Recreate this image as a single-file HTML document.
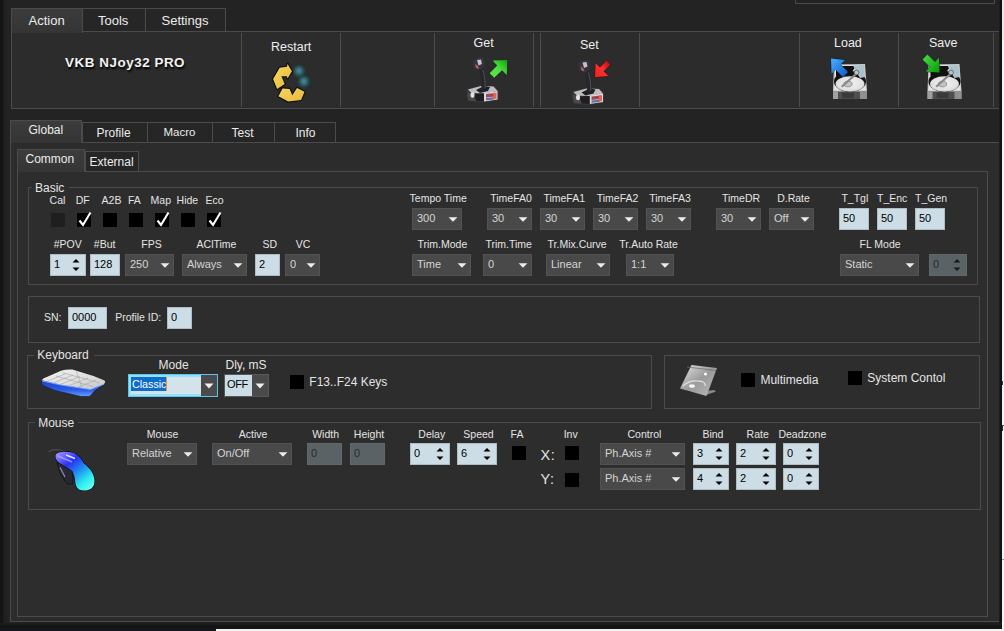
<!DOCTYPE html>
<html><head><meta charset="utf-8"><style>
html,body{margin:0;padding:0;}
body{width:1004px;height:631px;overflow:hidden;background:#232323;position:relative;font-family:"Liberation Sans",sans-serif;}
.t{position:absolute;white-space:nowrap;line-height:normal;}
svg{display:block;}
</style></head><body>
<div style="position:absolute;left:0px;top:0px;width:3px;height:631px;background:#151515;"></div>
<div style="position:absolute;left:3px;top:0px;width:1px;height:631px;background:#1b1b1b;"></div>
<div style="position:absolute;left:4px;top:0px;width:3px;height:631px;background:#202020;"></div>
<div style="position:absolute;left:795px;top:-5px;width:200px;height:9px;border:1px solid #4a4a4a;box-sizing:border-box;"></div>
<div style="position:absolute;left:11px;top:31px;width:995px;height:78px;border:1px solid #4b4b4b;box-sizing:border-box;background:#2c2c2c;"></div>
<div style="position:absolute;left:11px;top:8px;width:72px;height:25px;border:1px solid #4b4b4b;border-bottom:none;box-sizing:border-box;background:linear-gradient(#3b3b3b,#353535);"></div>
<div style="position:absolute;left:82px;top:8px;width:64px;height:24px;border:1px solid #4b4b4b;box-sizing:border-box;background:#262626;"></div>
<div style="position:absolute;left:145px;top:8px;width:81px;height:24px;border:1px solid #4b4b4b;box-sizing:border-box;background:#262626;"></div>
<div class="t" style="left:28.5px;top:13.13px;font-size:13px;color:#ececec;">Action</div>
<div class="t" style="left:98.0px;top:13.13px;font-size:13px;color:#ececec;">Tools</div>
<div class="t" style="left:161.5px;top:13.13px;font-size:13px;color:#ececec;">Settings</div>
<div style="position:absolute;left:241px;top:33px;width:1px;height:74px;background:#4c4c4c;"></div>
<div style="position:absolute;left:340px;top:33px;width:1px;height:74px;background:#4c4c4c;"></div>
<div style="position:absolute;left:434px;top:33px;width:1px;height:74px;background:#4c4c4c;"></div>
<div style="position:absolute;left:533px;top:33px;width:1px;height:74px;background:#4c4c4c;"></div>
<div style="position:absolute;left:540px;top:33px;width:1px;height:74px;background:#4c4c4c;"></div>
<div style="position:absolute;left:639px;top:33px;width:1px;height:74px;background:#4c4c4c;"></div>
<div style="position:absolute;left:799px;top:33px;width:1px;height:74px;background:#4c4c4c;"></div>
<div style="position:absolute;left:898px;top:33px;width:1px;height:74px;background:#4c4c4c;"></div>
<div style="position:absolute;left:993px;top:33px;width:1px;height:74px;background:#4c4c4c;"></div>
<div class="t" style="left:65.0px;top:54.87px;font-size:13.4px;color:#f2f2f2;font-weight:bold;letter-spacing:0.55px;text-shadow:1px 2px 2px #000;">VKB NJoy32 PRO</div>
<div class="t" style="left:271.0px;top:39.69px;font-size:12.5px;color:#eeeeee;">Restart</div>
<div class="t" style="left:473.6px;top:35.69px;font-size:12.5px;color:#eeeeee;">Get</div>
<div class="t" style="left:580.0px;top:37.69px;font-size:12.5px;color:#eeeeee;">Set</div>
<div class="t" style="left:834.0px;top:35.69px;font-size:12.5px;color:#eeeeee;">Load</div>
<div class="t" style="left:929.0px;top:35.69px;font-size:12.5px;color:#eeeeee;">Save</div>
<div style="position:absolute;left:10px;top:142px;width:996px;height:480px;border:1px solid #4b4b4b;box-sizing:border-box;background:#2c2c2c;"></div>
<div style="position:absolute;left:10px;top:120px;width:72px;height:23px;border:1px solid #4b4b4b;border-bottom:none;box-sizing:border-box;background:linear-gradient(#3c3c3c,#343434);"></div>
<div style="position:absolute;left:82px;top:122px;width:66px;height:21px;border:1px solid #4b4b4b;box-sizing:border-box;background:#262626;"></div>
<div style="position:absolute;left:147px;top:122px;width:66px;height:21px;border:1px solid #4b4b4b;box-sizing:border-box;background:#262626;"></div>
<div style="position:absolute;left:212px;top:122px;width:63px;height:21px;border:1px solid #4b4b4b;box-sizing:border-box;background:#262626;"></div>
<div style="position:absolute;left:274px;top:122px;width:62px;height:21px;border:1px solid #4b4b4b;box-sizing:border-box;background:#262626;"></div>
<div class="t" style="left:28.5px;top:123.04px;font-size:12px;color:#ececec;">Global</div>
<div class="t" style="left:96.6px;top:126.04px;font-size:12px;color:#ececec;">Profile</div>
<div class="t" style="left:163.5px;top:126.49px;font-size:11.5px;color:#ececec;">Macro</div>
<div class="t" style="left:231.6px;top:126.04px;font-size:12px;color:#ececec;">Test</div>
<div class="t" style="left:295.4px;top:126.04px;font-size:12px;color:#ececec;">Info</div>
<div style="position:absolute;left:17px;top:171px;width:971px;height:446px;border:1px solid #4b4b4b;box-sizing:border-box;background:#2d2d2d;"></div>
<div style="position:absolute;left:17px;top:149px;width:68px;height:23px;border:1px solid #4b4b4b;border-bottom:none;box-sizing:border-box;background:linear-gradient(#3c3c3c,#353535);"></div>
<div style="position:absolute;left:85px;top:151px;width:54px;height:21px;border:1px solid #4b4b4b;box-sizing:border-box;background:#262626;"></div>
<div class="t" style="left:25.5px;top:151.94px;font-size:12px;color:#ececec;">Common</div>
<div class="t" style="left:89.6px;top:154.94px;font-size:12px;color:#ececec;">External</div>
<div style="position:absolute;left:28px;top:187px;width:950px;height:98px;border:1px solid #4b4b4b;box-sizing:border-box;"></div>
<div style="position:absolute;left:32px;top:185px;width:37px;height:4px;background:#2d2d2d;"></div>
<div class="t" style="left:35.0px;top:181.04px;font-size:12px;color:#e4e4e4;">Basic</div>
<div class="t" style="left:49.6px;top:194.10px;font-size:10.5px;color:#e4e4e4;">Cal</div>
<div class="t" style="left:75.7px;top:194.10px;font-size:10.5px;color:#e4e4e4;">DF</div>
<div class="t" style="left:101.6px;top:194.10px;font-size:10.5px;color:#e4e4e4;">A2B</div>
<div class="t" style="left:127.9px;top:194.10px;font-size:10.5px;color:#e4e4e4;">FA</div>
<div class="t" style="left:150.6px;top:194.10px;font-size:10.5px;color:#e4e4e4;">Map</div>
<div class="t" style="left:176.6px;top:194.10px;font-size:10.5px;color:#e4e4e4;">Hide</div>
<div class="t" style="left:205.5px;top:194.10px;font-size:10.5px;color:#e4e4e4;">Eco</div>
<div style="position:absolute;left:51px;top:213px;width:14px;height:14px;background:#1f1f1f;"></div>
<div style="position:absolute;left:77px;top:213px;width:14px;height:14px;background:#000;"></div>
<svg style="position:absolute;left:77px;top:211px" width="16" height="17"><path d="M2.5 9.5 L6 14 L13.5 1.5" stroke="#fff" stroke-width="2.1" fill="none" stroke-linejoin="miter"/></svg>
<div style="position:absolute;left:103px;top:213px;width:14px;height:14px;background:#000;"></div>
<div style="position:absolute;left:129px;top:213px;width:14px;height:14px;background:#000;"></div>
<div style="position:absolute;left:155px;top:213px;width:14px;height:14px;background:#000;"></div>
<svg style="position:absolute;left:155px;top:211px" width="16" height="17"><path d="M2.5 9.5 L6 14 L13.5 1.5" stroke="#fff" stroke-width="2.1" fill="none" stroke-linejoin="miter"/></svg>
<div style="position:absolute;left:181px;top:213px;width:14px;height:14px;background:#000;"></div>
<div style="position:absolute;left:207px;top:213px;width:14px;height:14px;background:#000;"></div>
<svg style="position:absolute;left:207px;top:211px" width="16" height="17"><path d="M2.5 9.5 L6 14 L13.5 1.5" stroke="#fff" stroke-width="2.1" fill="none" stroke-linejoin="miter"/></svg>
<div class="t" style="left:409.6px;top:192.10px;font-size:10.5px;color:#e4e4e4;">Tempo Time</div>
<div class="t" style="left:490.2px;top:192.10px;font-size:10.5px;color:#e4e4e4;">TimeFA0</div>
<div class="t" style="left:543.4px;top:192.10px;font-size:10.5px;color:#e4e4e4;">TimeFA1</div>
<div class="t" style="left:596.7px;top:192.10px;font-size:10.5px;color:#e4e4e4;">TimeFA2</div>
<div class="t" style="left:649.2px;top:192.10px;font-size:10.5px;color:#e4e4e4;">TimeFA3</div>
<div class="t" style="left:722.0px;top:192.10px;font-size:10.5px;color:#e4e4e4;">TimeDR</div>
<div class="t" style="left:777.2px;top:192.10px;font-size:10.5px;color:#e4e4e4;">D.Rate</div>
<div class="t" style="left:841.4px;top:192.10px;font-size:10.5px;color:#e4e4e4;">T_Tgl</div>
<div class="t" style="left:877.0px;top:192.10px;font-size:10.5px;color:#e4e4e4;">T_Enc</div>
<div class="t" style="left:915.0px;top:192.10px;font-size:10.5px;color:#e4e4e4;">T_Gen</div>
<div style="position:absolute;left:412px;top:208px;width:50px;height:22px;border:1px solid #525252;box-sizing:border-box;background:#494949;"></div>
<div class="t" style="left:417.0px;top:212.04px;font-size:11px;color:#d4d4d4;">300</div>
<svg style="position:absolute;left:447.8px;top:216.8px" width="10" height="6"><path d="M0.6 0.3 L9.4 0.3 L5 4.8 Z" fill="#ececec"/></svg>
<div style="position:absolute;left:487px;top:208px;width:45px;height:22px;border:1px solid #525252;box-sizing:border-box;background:#494949;"></div>
<div class="t" style="left:492.0px;top:212.04px;font-size:11px;color:#d4d4d4;">30</div>
<svg style="position:absolute;left:517.8px;top:216.8px" width="10" height="6"><path d="M0.6 0.3 L9.4 0.3 L5 4.8 Z" fill="#ececec"/></svg>
<div style="position:absolute;left:540px;top:208px;width:45px;height:22px;border:1px solid #525252;box-sizing:border-box;background:#494949;"></div>
<div class="t" style="left:545.0px;top:212.04px;font-size:11px;color:#d4d4d4;">30</div>
<svg style="position:absolute;left:570.8px;top:216.8px" width="10" height="6"><path d="M0.6 0.3 L9.4 0.3 L5 4.8 Z" fill="#ececec"/></svg>
<div style="position:absolute;left:593px;top:208px;width:45px;height:22px;border:1px solid #525252;box-sizing:border-box;background:#494949;"></div>
<div class="t" style="left:598.0px;top:212.04px;font-size:11px;color:#d4d4d4;">30</div>
<svg style="position:absolute;left:623.8px;top:216.8px" width="10" height="6"><path d="M0.6 0.3 L9.4 0.3 L5 4.8 Z" fill="#ececec"/></svg>
<div style="position:absolute;left:646px;top:208px;width:45px;height:22px;border:1px solid #525252;box-sizing:border-box;background:#494949;"></div>
<div class="t" style="left:651.0px;top:212.04px;font-size:11px;color:#d4d4d4;">30</div>
<svg style="position:absolute;left:676.8px;top:216.8px" width="10" height="6"><path d="M0.6 0.3 L9.4 0.3 L5 4.8 Z" fill="#ececec"/></svg>
<div style="position:absolute;left:716px;top:208px;width:45px;height:22px;border:1px solid #525252;box-sizing:border-box;background:#494949;"></div>
<div class="t" style="left:721.0px;top:212.04px;font-size:11px;color:#d4d4d4;">30</div>
<svg style="position:absolute;left:746.8px;top:216.8px" width="10" height="6"><path d="M0.6 0.3 L9.4 0.3 L5 4.8 Z" fill="#ececec"/></svg>
<div style="position:absolute;left:769px;top:208px;width:45px;height:22px;border:1px solid #525252;box-sizing:border-box;background:#494949;"></div>
<div class="t" style="left:774.0px;top:212.04px;font-size:11px;color:#d4d4d4;">Off</div>
<svg style="position:absolute;left:799.8px;top:216.8px" width="10" height="6"><path d="M0.6 0.3 L9.4 0.3 L5 4.8 Z" fill="#ececec"/></svg>
<div style="position:absolute;left:839px;top:208px;width:30px;height:22px;border:1px solid #aebcc4;box-sizing:border-box;background:#cddde6;"></div>
<div class="t" style="left:843.0px;top:212.04px;font-size:11px;color:#000;">50</div>
<div style="position:absolute;left:877px;top:208px;width:30px;height:22px;border:1px solid #aebcc4;box-sizing:border-box;background:#cddde6;"></div>
<div class="t" style="left:881.0px;top:212.04px;font-size:11px;color:#000;">50</div>
<div style="position:absolute;left:915px;top:208px;width:30px;height:22px;border:1px solid #aebcc4;box-sizing:border-box;background:#cddde6;"></div>
<div class="t" style="left:919.0px;top:212.04px;font-size:11px;color:#000;">50</div>
<div class="t" style="left:53.7px;top:238.30px;font-size:10.5px;color:#e4e4e4;">#POV</div>
<div class="t" style="left:93.8px;top:238.30px;font-size:10.5px;color:#e4e4e4;">#But</div>
<div class="t" style="left:141.3px;top:238.30px;font-size:10.5px;color:#e4e4e4;">FPS</div>
<div class="t" style="left:196.6px;top:238.30px;font-size:10.5px;color:#e4e4e4;">AClTime</div>
<div class="t" style="left:262.4px;top:238.30px;font-size:10.5px;color:#e4e4e4;">SD</div>
<div class="t" style="left:295.7px;top:238.30px;font-size:10.5px;color:#e4e4e4;">VC</div>
<div class="t" style="left:417.5px;top:238.30px;font-size:10.5px;color:#e4e4e4;">Trim.Mode</div>
<div class="t" style="left:485.4px;top:238.30px;font-size:10.5px;color:#e4e4e4;">Trim.Time</div>
<div class="t" style="left:547.6px;top:238.30px;font-size:10.5px;color:#e4e4e4;">Tr.Mix.Curve</div>
<div class="t" style="left:619.3px;top:238.30px;font-size:10.5px;color:#e4e4e4;">Tr.Auto Rate</div>
<div class="t" style="left:859.6px;top:238.30px;font-size:10.5px;color:#e4e4e4;">FL Mode</div>
<div style="position:absolute;left:50px;top:254px;width:36px;height:22px;border:1px solid #aebcc4;box-sizing:border-box;background:#cddde6;"></div>
<div class="t" style="left:54.0px;top:258.05px;font-size:11px;color:#000;">1</div>
<svg style="position:absolute;left:71px;top:258.0px" width="10" height="14"><path d="M1.5 4.5 L8.5 4.5 L5 1 Z" fill="#000"/><path d="M1.5 9.5 L8.5 9.5 L5 13 Z" fill="#000"/></svg>
<div style="position:absolute;left:90px;top:254px;width:30px;height:22px;border:1px solid #aebcc4;box-sizing:border-box;background:#cddde6;"></div>
<div class="t" style="left:94.0px;top:258.05px;font-size:11px;color:#000;">128</div>
<div style="position:absolute;left:125px;top:254px;width:49px;height:22px;border:1px solid #525252;box-sizing:border-box;background:#494949;"></div>
<div class="t" style="left:130.0px;top:258.05px;font-size:11px;color:#d4d4d4;">250</div>
<svg style="position:absolute;left:159.8px;top:262.8px" width="10" height="6"><path d="M0.6 0.3 L9.4 0.3 L5 4.8 Z" fill="#ececec"/></svg>
<div style="position:absolute;left:182px;top:254px;width:65px;height:22px;border:1px solid #525252;box-sizing:border-box;background:#494949;"></div>
<div class="t" style="left:187.0px;top:258.05px;font-size:11px;color:#d4d4d4;">Always</div>
<svg style="position:absolute;left:232.8px;top:262.8px" width="10" height="6"><path d="M0.6 0.3 L9.4 0.3 L5 4.8 Z" fill="#ececec"/></svg>
<div style="position:absolute;left:255px;top:254px;width:25px;height:22px;border:1px solid #aebcc4;box-sizing:border-box;background:#cddde6;"></div>
<div class="t" style="left:259.0px;top:258.05px;font-size:11px;color:#000;">2</div>
<div style="position:absolute;left:285px;top:254px;width:35px;height:22px;border:1px solid #525252;box-sizing:border-box;background:#494949;"></div>
<div class="t" style="left:290.0px;top:258.05px;font-size:11px;color:#d4d4d4;">0</div>
<svg style="position:absolute;left:305.8px;top:262.8px" width="10" height="6"><path d="M0.6 0.3 L9.4 0.3 L5 4.8 Z" fill="#ececec"/></svg>
<div style="position:absolute;left:412px;top:254px;width:59px;height:22px;border:1px solid #525252;box-sizing:border-box;background:#494949;"></div>
<div class="t" style="left:417.0px;top:258.05px;font-size:11px;color:#d4d4d4;">Time</div>
<svg style="position:absolute;left:456.8px;top:262.8px" width="10" height="6"><path d="M0.6 0.3 L9.4 0.3 L5 4.8 Z" fill="#ececec"/></svg>
<div style="position:absolute;left:483px;top:254px;width:49px;height:22px;border:1px solid #525252;box-sizing:border-box;background:#494949;"></div>
<div class="t" style="left:488.0px;top:258.05px;font-size:11px;color:#d4d4d4;">0</div>
<svg style="position:absolute;left:517.8px;top:262.8px" width="10" height="6"><path d="M0.6 0.3 L9.4 0.3 L5 4.8 Z" fill="#ececec"/></svg>
<div style="position:absolute;left:546px;top:254px;width:64px;height:22px;border:1px solid #525252;box-sizing:border-box;background:#494949;"></div>
<div class="t" style="left:551.0px;top:258.05px;font-size:11px;color:#d4d4d4;">Linear</div>
<svg style="position:absolute;left:595.8px;top:262.8px" width="10" height="6"><path d="M0.6 0.3 L9.4 0.3 L5 4.8 Z" fill="#ececec"/></svg>
<div style="position:absolute;left:626px;top:254px;width:48px;height:22px;border:1px solid #525252;box-sizing:border-box;background:#494949;"></div>
<div class="t" style="left:631.0px;top:258.05px;font-size:11px;color:#d4d4d4;">1:1</div>
<svg style="position:absolute;left:659.8px;top:262.8px" width="10" height="6"><path d="M0.6 0.3 L9.4 0.3 L5 4.8 Z" fill="#ececec"/></svg>
<div style="position:absolute;left:840px;top:254px;width:79px;height:22px;border:1px solid #525252;box-sizing:border-box;background:#494949;"></div>
<div class="t" style="left:845.0px;top:258.05px;font-size:11px;color:#d4d4d4;">Static</div>
<svg style="position:absolute;left:904.8px;top:262.8px" width="10" height="6"><path d="M0.6 0.3 L9.4 0.3 L5 4.8 Z" fill="#ececec"/></svg>
<div style="position:absolute;left:929px;top:254px;width:38px;height:22px;border:1px solid #5f676b;box-sizing:border-box;background:#5a6266;"></div>
<div class="t" style="left:933.0px;top:258.05px;font-size:11px;color:#2a2a2a;">0</div>
<svg style="position:absolute;left:952px;top:258.0px" width="10" height="14"><path d="M1.5 4.5 L8.5 4.5 L5 1 Z" fill="#1a1a1a"/><path d="M1.5 9.5 L8.5 9.5 L5 13 Z" fill="#1a1a1a"/></svg>
<div style="position:absolute;left:28px;top:296px;width:952px;height:47px;border:1px solid #4b4b4b;box-sizing:border-box;"></div>
<div class="t" style="left:44.0px;top:311.40px;font-size:10.5px;color:#e4e4e4;">SN:</div>
<div style="position:absolute;left:68px;top:307px;width:39px;height:22px;border:1px solid #aebcc4;box-sizing:border-box;background:#cddde6;"></div>
<div class="t" style="left:72.0px;top:311.05px;font-size:11px;color:#000;">0000</div>
<div class="t" style="left:115.2px;top:311.40px;font-size:10.5px;color:#e4e4e4;">Profile ID:</div>
<div style="position:absolute;left:167px;top:307px;width:25px;height:22px;border:1px solid #aebcc4;box-sizing:border-box;background:#cddde6;"></div>
<div class="t" style="left:171.0px;top:311.05px;font-size:11px;color:#000;">0</div>
<div style="position:absolute;left:27px;top:355px;width:625px;height:54px;border:1px solid #4b4b4b;box-sizing:border-box;"></div>
<div style="position:absolute;left:34.3px;top:353px;width:60px;height:4px;background:#2d2d2d;"></div>
<div class="t" style="left:37.3px;top:348.14px;font-size:12px;color:#e4e4e4;">Keyboard</div>
<div class="t" style="left:158.6px;top:357.64px;font-size:12px;color:#e4e4e4;">Mode</div>
<div class="t" style="left:225.5px;top:357.64px;font-size:12px;color:#e4e4e4;">Dly, mS</div>
<div style="position:absolute;left:128px;top:374px;width:90px;height:23px;border:1px solid #5cc4f0;box-sizing:border-box;background:#d4e2ea;"></div>
<div style="position:absolute;left:129px;top:375px;width:88px;height:2px;background:#92e2fb;"></div>
<div style="position:absolute;left:129px;top:394px;width:88px;height:2px;background:#92e2fb;"></div>
<div style="position:absolute;left:129px;top:375px;width:2px;height:21px;background:#92e2fb;"></div>
<div style="position:absolute;left:131px;top:377px;width:35px;height:14px;background:#0e6ccc;"></div>
<div class="t" style="left:132.0px;top:378.12px;font-size:10.7px;color:#ffffff;">Classic</div>
<div style="position:absolute;left:166px;top:377px;width:1px;height:14px;background:#e89040;"></div>
<div style="position:absolute;left:201px;top:375px;width:16px;height:21px;background:#4a4a4a;"></div>
<svg style="position:absolute;left:203.5px;top:383px" width="10" height="6"><path d="M0.5 0.5 L9.5 0.5 L5 5.5 Z" fill="#f0f0f0"/></svg>
<div style="position:absolute;left:224px;top:374px;width:45px;height:23px;border:1px solid #525a60;box-sizing:border-box;background:#cddde6;"></div>
<div style="position:absolute;left:252px;top:375px;width:16px;height:21px;background:#4a4a4a;"></div>
<svg style="position:absolute;left:255px;top:383px" width="10" height="6"><path d="M0.5 0.5 L9.5 0.5 L5 5.5 Z" fill="#f0f0f0"/></svg>
<div class="t" style="left:227.0px;top:377.65px;font-size:11px;color:#000;letter-spacing:-0.4px;">OFF</div>
<div style="position:absolute;left:290px;top:375px;width:14px;height:14px;background:#000;"></div>
<div class="t" style="left:309.3px;top:375.04px;font-size:12px;color:#e4e4e4;">F13..F24 Keys</div>
<div style="position:absolute;left:664px;top:355px;width:316px;height:54px;border:1px solid #4b4b4b;box-sizing:border-box;"></div>
<div style="position:absolute;left:741px;top:373px;width:14px;height:14px;background:#000;"></div>
<div class="t" style="left:760.4px;top:373.34px;font-size:12px;color:#e4e4e4;">Multimedia</div>
<div style="position:absolute;left:848px;top:371px;width:14px;height:14px;background:#000;"></div>
<div class="t" style="left:867.3px;top:370.74px;font-size:12px;color:#e4e4e4;">System Contol</div>
<div style="position:absolute;left:28px;top:422px;width:953px;height:88px;border:1px solid #4b4b4b;box-sizing:border-box;"></div>
<div style="position:absolute;left:35.2px;top:420px;width:43px;height:4px;background:#2d2d2d;"></div>
<div class="t" style="left:38.2px;top:416.14px;font-size:12px;color:#e4e4e4;">Mouse</div>
<div class="t" style="left:146.8px;top:427.70px;font-size:10.5px;color:#e4e4e4;">Mouse</div>
<div class="t" style="left:238.8px;top:427.70px;font-size:10.5px;color:#e4e4e4;">Active</div>
<div class="t" style="left:312.2px;top:427.70px;font-size:10.5px;color:#e4e4e4;">Width</div>
<div class="t" style="left:353.8px;top:427.70px;font-size:10.5px;color:#e4e4e4;">Height</div>
<div class="t" style="left:418.3px;top:427.70px;font-size:10.5px;color:#e4e4e4;">Delay</div>
<div class="t" style="left:463.3px;top:427.70px;font-size:10.5px;color:#e4e4e4;">Speed</div>
<div class="t" style="left:510.6px;top:427.70px;font-size:10.5px;color:#e4e4e4;">FA</div>
<div class="t" style="left:563.7px;top:427.70px;font-size:10.5px;color:#e4e4e4;">Inv</div>
<div class="t" style="left:627.5px;top:427.70px;font-size:10.5px;color:#e4e4e4;">Control</div>
<div class="t" style="left:702.4px;top:427.70px;font-size:10.5px;color:#e4e4e4;">Bind</div>
<div class="t" style="left:746.6px;top:427.70px;font-size:10.5px;color:#e4e4e4;">Rate</div>
<div class="t" style="left:778.4px;top:427.70px;font-size:10.5px;color:#e4e4e4;">Deadzone</div>
<div style="position:absolute;left:127px;top:443px;width:70px;height:22px;border:1px solid #525252;box-sizing:border-box;background:#494949;"></div>
<div class="t" style="left:132.0px;top:447.05px;font-size:11px;color:#d4d4d4;">Relative</div>
<svg style="position:absolute;left:182.8px;top:451.8px" width="10" height="6"><path d="M0.6 0.3 L9.4 0.3 L5 4.8 Z" fill="#ececec"/></svg>
<div style="position:absolute;left:212px;top:443px;width:80px;height:22px;border:1px solid #525252;box-sizing:border-box;background:#494949;"></div>
<div class="t" style="left:217.0px;top:447.05px;font-size:11px;color:#d4d4d4;">On/Off</div>
<svg style="position:absolute;left:277.8px;top:451.8px" width="10" height="6"><path d="M0.6 0.3 L9.4 0.3 L5 4.8 Z" fill="#ececec"/></svg>
<div style="position:absolute;left:307px;top:443px;width:35px;height:22px;border:1px solid #60686c;box-sizing:border-box;background:#5a6266;"></div>
<div class="t" style="left:311.0px;top:447.05px;font-size:11px;color:#2a2a2a;">0</div>
<div style="position:absolute;left:350px;top:443px;width:35px;height:22px;border:1px solid #60686c;box-sizing:border-box;background:#5a6266;"></div>
<div class="t" style="left:354.0px;top:447.05px;font-size:11px;color:#2a2a2a;">0</div>
<div style="position:absolute;left:410px;top:443px;width:40px;height:22px;border:1px solid #aebcc4;box-sizing:border-box;background:#cddde6;"></div>
<div class="t" style="left:414.0px;top:447.05px;font-size:11px;color:#000;">0</div>
<svg style="position:absolute;left:435px;top:447.0px" width="10" height="14"><path d="M1.5 4.5 L8.5 4.5 L5 1 Z" fill="#000"/><path d="M1.5 9.5 L8.5 9.5 L5 13 Z" fill="#000"/></svg>
<div style="position:absolute;left:457px;top:443px;width:40px;height:22px;border:1px solid #aebcc4;box-sizing:border-box;background:#cddde6;"></div>
<div class="t" style="left:461.0px;top:447.05px;font-size:11px;color:#000;">6</div>
<svg style="position:absolute;left:482px;top:447.0px" width="10" height="14"><path d="M1.5 4.5 L8.5 4.5 L5 1 Z" fill="#000"/><path d="M1.5 9.5 L8.5 9.5 L5 13 Z" fill="#000"/></svg>
<div style="position:absolute;left:512px;top:446px;width:14px;height:14px;background:#000;"></div>
<div class="t" style="left:540.5px;top:446.68px;font-size:14.5px;color:#e4e4e4;letter-spacing:0.6px;">X:</div>
<div class="t" style="left:540.5px;top:471.48px;font-size:14.5px;color:#e4e4e4;letter-spacing:0.6px;">Y:</div>
<div style="position:absolute;left:565px;top:446px;width:14px;height:14px;background:#000;"></div>
<div style="position:absolute;left:565px;top:473px;width:14px;height:14px;background:#000;"></div>
<div style="position:absolute;left:600px;top:443px;width:85px;height:22px;border:1px solid #525252;box-sizing:border-box;background:#494949;"></div>
<div class="t" style="left:605.0px;top:447.05px;font-size:11px;color:#d4d4d4;">Ph.Axis #</div>
<svg style="position:absolute;left:670.8px;top:451.8px" width="10" height="6"><path d="M0.6 0.3 L9.4 0.3 L5 4.8 Z" fill="#ececec"/></svg>
<div style="position:absolute;left:600px;top:468px;width:85px;height:22px;border:1px solid #525252;box-sizing:border-box;background:#494949;"></div>
<div class="t" style="left:605.0px;top:472.05px;font-size:11px;color:#d4d4d4;">Ph.Axis #</div>
<svg style="position:absolute;left:670.8px;top:476.8px" width="10" height="6"><path d="M0.6 0.3 L9.4 0.3 L5 4.8 Z" fill="#ececec"/></svg>
<div style="position:absolute;left:693px;top:443px;width:36px;height:22px;border:1px solid #aebcc4;box-sizing:border-box;background:#cddde6;"></div>
<div class="t" style="left:697.0px;top:447.05px;font-size:11px;color:#000;">3</div>
<svg style="position:absolute;left:714px;top:447.0px" width="10" height="14"><path d="M1.5 4.5 L8.5 4.5 L5 1 Z" fill="#000"/><path d="M1.5 9.5 L8.5 9.5 L5 13 Z" fill="#000"/></svg>
<div style="position:absolute;left:693px;top:468px;width:36px;height:22px;border:1px solid #aebcc4;box-sizing:border-box;background:#cddde6;"></div>
<div class="t" style="left:697.0px;top:472.05px;font-size:11px;color:#000;">4</div>
<svg style="position:absolute;left:714px;top:472.0px" width="10" height="14"><path d="M1.5 4.5 L8.5 4.5 L5 1 Z" fill="#000"/><path d="M1.5 9.5 L8.5 9.5 L5 13 Z" fill="#000"/></svg>
<div style="position:absolute;left:736px;top:443px;width:40px;height:22px;border:1px solid #aebcc4;box-sizing:border-box;background:#cddde6;"></div>
<div class="t" style="left:740.0px;top:447.05px;font-size:11px;color:#000;">2</div>
<svg style="position:absolute;left:761px;top:447.0px" width="10" height="14"><path d="M1.5 4.5 L8.5 4.5 L5 1 Z" fill="#000"/><path d="M1.5 9.5 L8.5 9.5 L5 13 Z" fill="#000"/></svg>
<div style="position:absolute;left:736px;top:468px;width:40px;height:22px;border:1px solid #aebcc4;box-sizing:border-box;background:#cddde6;"></div>
<div class="t" style="left:740.0px;top:472.05px;font-size:11px;color:#000;">2</div>
<svg style="position:absolute;left:761px;top:472.0px" width="10" height="14"><path d="M1.5 4.5 L8.5 4.5 L5 1 Z" fill="#000"/><path d="M1.5 9.5 L8.5 9.5 L5 13 Z" fill="#000"/></svg>
<div style="position:absolute;left:783px;top:443px;width:36px;height:22px;border:1px solid #aebcc4;box-sizing:border-box;background:#cddde6;"></div>
<div class="t" style="left:787.0px;top:447.05px;font-size:11px;color:#000;">0</div>
<svg style="position:absolute;left:804px;top:447.0px" width="10" height="14"><path d="M1.5 4.5 L8.5 4.5 L5 1 Z" fill="#000"/><path d="M1.5 9.5 L8.5 9.5 L5 13 Z" fill="#000"/></svg>
<div style="position:absolute;left:783px;top:468px;width:36px;height:22px;border:1px solid #aebcc4;box-sizing:border-box;background:#cddde6;"></div>
<div class="t" style="left:787.0px;top:472.05px;font-size:11px;color:#000;">0</div>
<svg style="position:absolute;left:804px;top:472.0px" width="10" height="14"><path d="M1.5 4.5 L8.5 4.5 L5 1 Z" fill="#000"/><path d="M1.5 9.5 L8.5 9.5 L5 13 Z" fill="#000"/></svg>
<div style="position:absolute;left:999px;top:0px;width:1px;height:631px;background:#1c1c1c;"></div>
<div style="position:absolute;left:1000px;top:0px;width:2px;height:631px;background:#121212;"></div>
<div style="position:absolute;left:1002px;top:0px;width:2px;height:40px;background:#eeeadf;"></div>
<div style="position:absolute;left:1002px;top:40px;width:2px;height:591px;background:#f2f3f5;"></div>
<div style="position:absolute;left:1002px;top:381px;width:1px;height:4px;background:#304050;"></div>
<div style="position:absolute;left:1002px;top:425px;width:2px;height:1px;background:#404040;"></div>
<div style="position:absolute;left:1002px;top:426px;width:1px;height:5px;background:#303030;"></div>
<div style="position:absolute;left:1002px;top:559px;width:2px;height:1px;background:#9098a0;"></div>
<div style="position:absolute;left:0px;top:623px;width:1002px;height:8px;background:#1c1c1c;"></div>
<div style="position:absolute;left:0px;top:625px;width:1002px;height:6px;background:#141414;"></div>
<div style="position:absolute;left:0px;top:628px;width:216px;height:3px;background:#15171d;"></div>
<div style="position:absolute;left:216px;top:629px;width:788px;height:2px;background:#f2f2f2;"></div>
<svg style="position:absolute;left:262px;top:58px;overflow:visible;filter:blur(0.35px)" width="50" height="50" viewBox="262 58 50 50"><defs>
<radialGradient id="rb" cx="0.45" cy="0.45" r="0.55"><stop offset="0" stop-color="#5a9aa8"/><stop offset="0.55" stop-color="#2a5a64"/><stop offset="1" stop-color="#202c30"/></radialGradient><filter id="bl" x="-0.5" y="-0.5" width="2" height="2"><feGaussianBlur stdDeviation="0.8"/></filter>
<linearGradient id="ry" x1="0" y1="0" x2="1" y2="1"><stop offset="0" stop-color="#f4d868"/><stop offset="1" stop-color="#e8b830"/></linearGradient>
</defs>
<g filter="url(#bl)"><circle cx="299.5" cy="71.5" r="6.3" fill="url(#rb)"/>
<circle cx="304.5" cy="82" r="6.3" fill="url(#rb)"/></g>
<g stroke="#101010" stroke-width="2.4" stroke-linejoin="round" style="paint-order:stroke">
<path d="M287.6 63.9 L291.9 71.3 L287.6 78.4 L286.9 76.3 L281.4 76.3 L284.7 83.9 L277.1 88.9 L273.1 79.1 L279.7 67.7 L286.9 66.8 Z" fill="url(#ry)"/>
<path d="M278.4 96.2 L282.5 88.4 L289.6 88.9 L292.3 95.2 L297 88.1 L304.5 91.8 L301.1 99.9 L288.2 101.6 Z" fill="url(#ry)"/>
</g></svg>
<svg style="position:absolute;left:460px;top:52px;overflow:visible;filter:blur(0.35px)" width="160" height="56" viewBox="460 52 160 56"><g transform="translate(0,0)"><path d="M467 89 L481 85.5 L494 86 L498.5 91 L498.5 100 L483 102.5 L468 101 L466.5 93 Z" fill="#3a3a3c"/>
<path d="M468 89.5 L481 86 L493.5 86.5 L497.5 91 L484 93.5 L472 93.5 Z" fill="#bcbec2"/>
<path d="M484 93 L497.5 91 L497.5 99.5 L484 101.5 Z" fill="#d8d8de"/>
<path d="M486 94 L495.5 93 L495.5 96.5 L486 97.5 Z" fill="#a04858"/>
<path d="M486 98 L494 97.2 L494 99.5 L486 100.2 Z" fill="#6070a0"/>
<rect x="493.5" y="92.8" width="3" height="6" fill="#f06040"/>
<path d="M467.5 93 L484 93.5 L484 101.5 L468.5 100.5 Z" fill="#4a4a4e"/><path d="M474 94 L484 93.5 L484 101.5 L476 101 Z" fill="#1e1e20"/>
<ellipse cx="472.5" cy="95" rx="2" ry="2.8" fill="#e6e2e2"/>
<path d="M476 90 L484 86 L490 87 L488 91 L480 93 Z" fill="#202024"/>
<path d="M478 67 C480.5 73 481.5 79 481.5 89 L486.5 89 C486.5 79 485 72 483 67 Z" fill="#26262c"/>
<path d="M483 70 C484.5 76 485.3 81 485.3 88" stroke="#5a5a68" stroke-width="0.8" fill="none"/>
<path d="M472.5 60.5 L479 57 L484 58.5 L484.5 66.5 L480.5 70 L474 68 Z" fill="#34323a"/>
<path d="M477 60 L481 59.5 L482 64 L478.5 65.5 Z" fill="#c8c0cc"/>
<path d="M475 64 L478 66 L479 69 L476 68 Z" fill="#b06070"/>
</g><defs><linearGradient id="ga" x1="0" y1="1" x2="1" y2="0"><stop offset="0" stop-color="#60e050"/><stop offset="0.5" stop-color="#50e040"/><stop offset="1" stop-color="#10a010"/></linearGradient></defs>
<path d="M507.3 60 L506.8 75 L502 70.2 L494.2 77.8 L489.6 73.2 L497.2 65.6 L492.6 60.6 Z" fill="url(#ga)" stroke="#0f2a10" stroke-width="0.8" style="paint-order:stroke"/></svg>
<svg style="position:absolute;left:460px;top:52px;overflow:visible;filter:blur(0.35px)" width="160" height="56" viewBox="460 52 160 56"><g transform="translate(105.5,2.5)"><path d="M467 89 L481 85.5 L494 86 L498.5 91 L498.5 100 L483 102.5 L468 101 L466.5 93 Z" fill="#3a3a3c"/>
<path d="M468 89.5 L481 86 L493.5 86.5 L497.5 91 L484 93.5 L472 93.5 Z" fill="#bcbec2"/>
<path d="M484 93 L497.5 91 L497.5 99.5 L484 101.5 Z" fill="#d8d8de"/>
<path d="M486 94 L495.5 93 L495.5 96.5 L486 97.5 Z" fill="#a04858"/>
<path d="M486 98 L494 97.2 L494 99.5 L486 100.2 Z" fill="#6070a0"/>
<rect x="493.5" y="92.8" width="3" height="6" fill="#f06040"/>
<path d="M467.5 93 L484 93.5 L484 101.5 L468.5 100.5 Z" fill="#4a4a4e"/><path d="M474 94 L484 93.5 L484 101.5 L476 101 Z" fill="#1e1e20"/>
<ellipse cx="472.5" cy="95" rx="2" ry="2.8" fill="#e6e2e2"/>
<path d="M476 90 L484 86 L490 87 L488 91 L480 93 Z" fill="#202024"/>
<path d="M478 67 C480.5 73 481.5 79 481.5 89 L486.5 89 C486.5 79 485 72 483 67 Z" fill="#26262c"/>
<path d="M483 70 C484.5 76 485.3 81 485.3 88" stroke="#5a5a68" stroke-width="0.8" fill="none"/>
<path d="M472.5 60.5 L479 57 L484 58.5 L484.5 66.5 L480.5 70 L474 68 Z" fill="#34323a"/>
<path d="M477 60 L481 59.5 L482 64 L478.5 65.5 Z" fill="#c8c0cc"/>
<path d="M475 64 L478 66 L479 69 L476 68 Z" fill="#b06070"/>
</g><defs><linearGradient id="sa" x1="1" y1="0" x2="0" y2="1"><stop offset="0" stop-color="#b00808"/><stop offset="0.5" stop-color="#ff3030"/><stop offset="1" stop-color="#f02020"/></linearGradient></defs>
<path d="M595 77.2 L595.5 63 L600 67.5 L606.5 60.6 L610.4 64.5 L603.6 71.2 L608.4 76 Z" fill="url(#sa)" stroke="#2a0a0a" stroke-width="0.8" style="paint-order:stroke"/></svg>
<svg style="position:absolute;left:820px;top:50px;overflow:visible;filter:blur(0.35px)" width="150" height="56" viewBox="820 50 150 56"><g transform="translate(0,0)"><defs><radialGradient id="plload" cx="0.5" cy="0.45" r="0.6"><stop offset="0" stop-color="#f4f4f4"/><stop offset="0.75" stop-color="#e0e0e0"/><stop offset="1" stop-color="#b0b0b0"/></radialGradient></defs>
<path d="M834 64.5 L865 64 L867 91 L867 99 L833 99 L833 91 Z" fill="#c8c8c8"/>
<path d="M835.5 65.5 L864 65 L866 90.5 L834 90.5 Z" fill="#e4e4e4"/>
<path d="M833 91.5 L867 91.5 L867 99 L833 99 Z" fill="#4e4e4e"/>
<rect x="833" y="91.5" width="5" height="7.5" fill="#a0a0a0"/>
<rect x="860" y="91.5" width="7" height="7.5" fill="#909090"/>
<rect x="842" y="92.5" width="12" height="5.5" fill="#3a3a3a"/>
<path d="M836 66 L856 66 L852 72 L836 76 Z" fill="#101010"/>
<ellipse cx="850" cy="81.5" rx="16" ry="10.5" fill="#121212"/>
<ellipse cx="850" cy="84" rx="14.5" ry="7.8" fill="url(#plload)"/>
<ellipse cx="848" cy="84" rx="4.2" ry="2.8" fill="#c4c4c4" stroke="#7a7a7a" stroke-width="0.7"/>
<path d="M853 65.5 L864 65 L865 77 L860 78 Q856 72 853 65.5 Z" fill="#a9c2ce"/>
<path d="M841 86 L856 72.5 L857.5 74 L842.5 87.5 Z" fill="#8a8a8a"/>
<circle cx="856.5" cy="72.5" r="2.4" fill="#c0c0c0" stroke="#4a4a4a" stroke-width="0.7"/>
</g><defs><linearGradient id="la" x1="0" y1="0" x2="1" y2="1"><stop offset="0" stop-color="#48b0ff"/><stop offset="1" stop-color="#0a58c8"/></linearGradient></defs>
<path d="M831 58.5 L845 60 L840.5 64.5 L848 72 L843 77 L835.5 69.5 L831.5 74 Z" fill="url(#la)" stroke="#0a1420" stroke-width="0.8" style="paint-order:stroke"/></svg>
<svg style="position:absolute;left:820px;top:50px;overflow:visible;filter:blur(0.35px)" width="150" height="56" viewBox="820 50 150 56"><g transform="translate(94.5,0)"><defs><radialGradient id="plsave" cx="0.5" cy="0.45" r="0.6"><stop offset="0" stop-color="#f4f4f4"/><stop offset="0.75" stop-color="#e0e0e0"/><stop offset="1" stop-color="#b0b0b0"/></radialGradient></defs>
<path d="M834 64.5 L865 64 L867 91 L867 99 L833 99 L833 91 Z" fill="#c8c8c8"/>
<path d="M835.5 65.5 L864 65 L866 90.5 L834 90.5 Z" fill="#e4e4e4"/>
<path d="M833 91.5 L867 91.5 L867 99 L833 99 Z" fill="#4e4e4e"/>
<rect x="833" y="91.5" width="5" height="7.5" fill="#a0a0a0"/>
<rect x="860" y="91.5" width="7" height="7.5" fill="#909090"/>
<rect x="842" y="92.5" width="12" height="5.5" fill="#3a3a3a"/>
<path d="M836 66 L856 66 L852 72 L836 76 Z" fill="#101010"/>
<ellipse cx="850" cy="81.5" rx="16" ry="10.5" fill="#121212"/>
<ellipse cx="850" cy="84" rx="14.5" ry="7.8" fill="url(#plsave)"/>
<ellipse cx="848" cy="84" rx="4.2" ry="2.8" fill="#c4c4c4" stroke="#7a7a7a" stroke-width="0.7"/>
<path d="M853 65.5 L864 65 L865 77 L860 78 Q856 72 853 65.5 Z" fill="#a9c2ce"/>
<path d="M841 86 L856 72.5 L857.5 74 L842.5 87.5 Z" fill="#8a8a8a"/>
<circle cx="856.5" cy="72.5" r="2.4" fill="#c0c0c0" stroke="#4a4a4a" stroke-width="0.7"/>
</g><defs><linearGradient id="sva" x1="0" y1="0" x2="1" y2="1"><stop offset="0" stop-color="#48e048"/><stop offset="1" stop-color="#0a9a0a"/></linearGradient></defs>
<path d="M939.5 72.5 L925.5 71.5 L930 67 L922.5 59.5 L927.5 54.5 L935 62 L939 57.5 Z" fill="url(#sva)" stroke="#0a200a" stroke-width="0.8" style="paint-order:stroke"/></svg>
<svg style="position:absolute;left:36px;top:364px;overflow:visible;filter:blur(0.35px)" width="74" height="36" viewBox="36 364 74 36"><defs><linearGradient id="kb" x1="0" y1="0" x2="0" y2="1"><stop offset="0" stop-color="#1a3cc8"/><stop offset="0.6" stop-color="#2c5ee8"/><stop offset="1" stop-color="#6aa0ff"/></linearGradient>
<linearGradient id="kt" x1="0" y1="0" x2="1" y2="1"><stop offset="0" stop-color="#f4f4f4"/><stop offset="0.6" stop-color="#dcdcdc"/><stop offset="1" stop-color="#c4c4c4"/></linearGradient></defs>
<path d="M41.5 380.5 Q41 384 43 385.5 L55 390.5 L81 396.5 L89 396.5 Q92 395 94 391.5 L104 384.5 Q105.5 383 105 381 Z" fill="url(#kb)" stroke="#101830" stroke-width="0.6"/>
<path d="M41.7 380.2 Q43 378 47.4 376.8 L61 370.7 Q66 369.3 72.3 369.6 L93.5 376 L104.5 380.5 Q106 382 104 384 L90.5 389.3 L61 384.7 Z" fill="url(#kt)"/>
<path d="M48 381 L66 373.5 M53 383 L73 375 M60 384.5 L80 376.5 M68 386 L88 378 M77 387.5 L96 380 M62 372.5 L100 383 M56 376 L93 386.5 M76 370.5 L82 387.5" stroke="#a4a4a4" stroke-width="0.6" fill="none"/>
<path d="M42 381 L61 385 L90.5 389.5 L104 384.3" stroke="#8ab4ff" stroke-width="0.8" fill="none"/></svg>
<svg style="position:absolute;left:676px;top:362px;overflow:visible;filter:blur(0.35px)" width="46" height="38" viewBox="676 362 46 38"><defs><linearGradient id="cd" x1="0" y1="0" x2="1" y2="1"><stop offset="0" stop-color="#e8e8e8"/><stop offset="0.5" stop-color="#9a9a9a"/><stop offset="1" stop-color="#bcbcbc"/></linearGradient></defs>
<path d="M706 395 L716 391.5 L714 390 L706 391 Z" fill="#8a8a8a"/>
<path d="M691.5 365 L717 368 L706.5 396 L680 388.5 Z" fill="url(#cd)"/>
<path d="M683 386 Q690 379 702 381.5 Q706 383 705 386" fill="none" stroke="#e0e0e0" stroke-width="1.3"/><ellipse cx="692" cy="386" rx="3" ry="1.8" fill="#f4f4f4"/><path d="M687 367 L716 370.5" stroke="#707070" stroke-width="0.8"/>
<circle cx="705.5" cy="374" r="1.6" fill="#fff"/></svg>
<svg style="position:absolute;left:44px;top:444px;overflow:visible;filter:blur(0.35px)" width="56" height="50" viewBox="44 444 56 50"><defs><linearGradient id="ms" x1="0.1" y1="0" x2="0.9" y2="1"><stop offset="0" stop-color="#9890ff"/><stop offset="0.3" stop-color="#2a30f0"/><stop offset="0.55" stop-color="#2090f0"/><stop offset="0.8" stop-color="#30f0f0"/><stop offset="1" stop-color="#70fff0"/></linearGradient></defs>
<path d="M48.5 451.5 C53 449 58 449 63 451" stroke="#4a5040" stroke-width="1.2" fill="none"/>
<path d="M55.5 455 C57 451.5 66 451 72 452.5 C79 454.5 81 459 84 463.5 C90 468 94.5 474 94.5 481 C94.5 488 90 490.5 84 490.5 C77 490.5 75.5 486 75 480 C74.5 474 72 470.5 67 468 C61 465 56 461 55.5 457 Z" fill="url(#ms)" stroke="#060612" stroke-width="1.2" style="paint-order:stroke"/>
<path d="M57 462 L66.5 467.5 L72.5 471.5 L73 484 L67 484 L60 473.5 Z" fill="#282834" stroke="#0a0a10" stroke-width="0.6"/>
<path d="M60 467.5 L65 477" stroke="#9090a8" stroke-width="1.2"/>
<path d="M66 455 L75 458.5" stroke="#e0e0ff" stroke-width="1.5"/>
<path d="M58 456 C62 458 68 460 72 462" stroke="#b8b0ff" stroke-width="1.4" fill="none" opacity="0.7"/></svg>
</body></html>
